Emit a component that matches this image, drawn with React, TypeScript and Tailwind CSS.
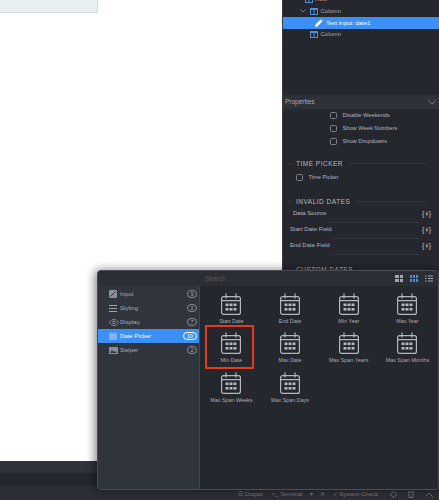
import React from 'react';

const font = { fontFamily: '"Liberation Sans", Arial, sans-serif' };

const categories = [
  { name: 'Input', count: 9, icon: 'input' },
  { name: 'Styling', count: 2, icon: 'styling' },
  { name: 'Display', count: 7, icon: 'display' },
  { name: 'Date Picker', count: 10, icon: 'date', active: true },
  { name: 'Swiper', count: 2, icon: 'swiper' },
];

const widgets = [
  'Start Date',
  'End Date',
  'Min Year',
  'Max Year',
  'Min Date',
  'Max Date',
  'Max Span Years',
  'Max Span Months',
  'Max Span Weeks',
  'Max Span Days',
];

function CalendarIcon() {
  return (
    <svg width="20" height="22" viewBox="0 0 20 22" fill="none" stroke="#b4b8bf" strokeWidth="1.2">
      <rect x="0.6" y="3.6" width="18.8" height="17.8" rx="2" />
      <path d="M0.6 7.6h18.8M5 0.5v5M15 0.5v5" />
      <g fill="#b4b8bf" stroke="none">
        <rect x="4.5" y="10.5" width="3" height="2.6" />
        <rect x="8.5" y="10.5" width="3" height="2.6" />
        <rect x="12.5" y="10.5" width="3" height="2.6" />
        <rect x="4.5" y="15" width="3" height="2.6" />
        <rect x="8.5" y="15" width="3" height="2.6" />
        <rect x="12.5" y="15" width="3" height="2.6" />
      </g>
    </svg>
  );
}

function ColumnIcon() {
  return (
    <svg width="8" height="7" viewBox="0 0 8 7" fill="none" stroke="#4a8fd8" strokeWidth="1">
      <rect x="0.5" y="0.5" width="7" height="6" />
      <path d="M4 0.5v6M0.5 1.5h7" />
    </svg>
  );
}

function Chevron() {
  return (
    <svg width="6" height="4" viewBox="0 0 6 4" fill="none" stroke="#8a8d93" strokeWidth="0.8">
      <path d="M0.5 0.5L3 3l2.5-2.5" />
    </svg>
  );
}

function CategoryIcon({ kind }: { kind: string }) {
  if (kind === 'input') {
    return (
      <svg width="8" height="8" viewBox="0 0 8 8">
        <rect width="8" height="8" rx="1" fill="#8b8f96" />
        <path d="M1.5 6.5L6.5 1.5" stroke="#2f333b" strokeWidth="1" />
      </svg>
    );
  }
  if (kind === 'styling') {
    return (
      <svg width="8" height="7" viewBox="0 0 8 7" stroke="#a0a4ab" strokeWidth="1">
        <path d="M0 0.5h8M0 3.5h8M0 6.5h8" />
      </svg>
    );
  }
  if (kind === 'display') {
    return (
      <svg width="10" height="7" viewBox="0 0 10 7" fill="none" stroke="#9a9ea5" strokeWidth="0.8">
        <path d="M0.5 3.5C2 1 3.5 0.5 5 0.5s3 0.5 4.5 3C8 6 6.5 6.5 5 6.5S2 6 0.5 3.5z" />
        <circle cx="5" cy="3.5" r="1.4" />
      </svg>
    );
  }
  if (kind === 'date') {
    return (
      <svg width="8" height="8" viewBox="0 0 8 8">
        <rect y="1" width="8" height="7" rx="1" fill="#7fb2ee" />
        <path d="M2 0v2M6 0v2" stroke="#7fb2ee" strokeWidth="0.8" />
      </svg>
    );
  }
  return (
    <svg width="9" height="7" viewBox="0 0 9 7">
      <rect width="9" height="7" fill="#8b8f96" />
      <path d="M1 6l2-3 2 2 1-1 2 2z" fill="#2f333b" />
    </svg>
  );
}

function Checkbox() {
  return <span className="h-[7px] w-[7px] shrink-0 rounded-[1.5px] border border-[#7d8087]" />;
}

function CheckRow({ label, className }: { label: string; className: string }) {
  return (
    <div className={`flex items-center gap-[5.5px] text-[5.7px] text-[#b3b6bb] ${className}`}>
      <Checkbox />
      <span>{label}</span>
    </div>
  );
}

function SectionTitle({ label, className }: { label: string; className: string }) {
  return (
    <div className={`flex items-center gap-[3px] pl-[5px] pr-[13px] ${className}`}>
      <span className="h-px w-[5px] bg-[#33363d]" />
      <span className="text-[6.5px] tracking-[0.5px] text-[#b9bcc1]">{label}</span>
      <span className="ml-[2px] h-px flex-1 bg-[#33363d]" />
    </div>
  );
}

function BindIcon() {
  return (
    <span className="flex w-[9px] items-center justify-between text-[7px] leading-none text-[#c9ccd1]">
      <span>{'{'}</span>
      <svg width="4" height="6" viewBox="0 0 4 6" fill="#e8983a">
        <path d="M2.4 0L0.3 3.3h1.4L1.2 6l2.5-3.6H2.2z" />
      </svg>
      <span>{'}'}</span>
    </span>
  );
}

function BindRow({ label, pad, lineLeft }: { label: string; pad: string; lineLeft: string }) {
  return (
    <div className="relative flex h-[16px] items-center justify-between pb-[2px] pr-[8px] text-[6px] text-[#b3b6bb]">
      <span className={pad}>{label}</span>
      <BindIcon />
      <span className={`absolute bottom-0 right-[20px] h-px bg-[#33363d] ${lineLeft}`} />
    </div>
  );
}

function RightPanel() {
  return (
    <div className="flex h-full w-[157px] flex-col overflow-hidden border-l border-[#3a3d44] bg-[#24272e]">
      <div className="-mt-[7px] flex h-[12px] shrink-0 items-center gap-[2px] pl-[14px] text-[6px] text-[#a9acb2]">
        <Chevron />
        <ColumnIcon />
        <span>Row</span>
      </div>
      <div className="flex h-[12px] shrink-0 items-center pl-[17px] text-[6px] text-[#a9acb2]">
        <span className="w-[10px]">
          <Chevron />
        </span>
        <ColumnIcon />
        <span className="ml-[2.5px]">Column</span>
      </div>
      <div className="flex h-[12px] shrink-0 items-center gap-[3px] bg-[#3b8ff5] pl-[32px] text-[6px] text-white">
        <svg width="8" height="8" viewBox="0 0 8 8" fill="#fff">
          <path d="M0 8l0.6-2.4L5.4 0.8 7.2 2.6 2.4 7.4zM5.9 0.3l0.5-0.3 1.6 1.6-0.3 0.5z" />
        </svg>
        <span>Text Input: date1</span>
      </div>
      <div className="flex h-[11px] shrink-0 items-center pl-[27px] text-[6px] text-[#a9acb2]">
        <ColumnIcon />
        <span className="ml-[2.5px]">Column</span>
      </div>

      <div className="mt-[55px] flex h-[14px] shrink-0 items-center justify-between bg-[#2e3138] pl-[2px] pr-[3px] text-[6.5px] text-[#a9acb2]">
        <span>Properties</span>
        <svg width="8" height="5" viewBox="0 0 8 5" fill="none" stroke="#8a8d93" strokeWidth="0.8">
          <path d="M0.5 0.5L4 4l3.5-3.5" />
        </svg>
      </div>

      <CheckRow label="Disable Weekends" className="ml-[47px] h-[13px] shrink-0" />
      <CheckRow label="Show Week Numbers" className="ml-[47px] h-[13px] shrink-0" />
      <CheckRow label="Show Dropdowns" className="ml-[47px] h-[13px] shrink-0" />
      <SectionTitle label="TIME PICKER" className="mt-[9.5px] h-[12px] shrink-0" />
      <CheckRow label="Time Picker" className="ml-[13px] mt-[1.5px] h-[13px] shrink-0" />
      <SectionTitle label="INVALID DATES" className="mt-[11.5px] h-[12px] shrink-0" />
      <div className="-mt-[1px] shrink-0">
        <BindRow label="Data Source" pad="pl-[10px]" lineLeft="left-[44px]" />
        <BindRow label="Start Date Field" pad="pl-[7px]" lineLeft="left-[49px]" />
        <BindRow label="End Date Field" pad="pl-[7px]" lineLeft="left-[47px]" />
      </div>
      <SectionTitle label="CUSTOM DATES" className="mt-[9px] h-[12px] shrink-0" />
    </div>
  );
}

function ViewToggles() {
  return (
    <div className="flex items-center gap-[7px]">
      <span className="grid h-[7px] w-[8px] grid-cols-2 gap-px">
        <i className="bg-[#a4a7ad]" />
        <i className="bg-[#a4a7ad]" />
        <i className="bg-[#a4a7ad]" />
        <i className="bg-[#a4a7ad]" />
      </span>
      <span className="grid h-[7px] w-[8px] grid-cols-3 gap-px">
        <i className="bg-[#3b8ff5]" />
        <i className="bg-[#3b8ff5]" />
        <i className="bg-[#3b8ff5]" />
        <i className="bg-[#3b8ff5]" />
        <i className="bg-[#3b8ff5]" />
        <i className="bg-[#3b8ff5]" />
      </span>
      <svg width="8" height="7" viewBox="0 0 8 7" stroke="#a4a7ad" strokeWidth="1">
        <path d="M0 1h1.5M3 1h5M0 3.5h1.5M3 3.5h5M0 6h1.5M3 6h5" />
      </svg>
    </div>
  );
}

function WidgetDialog() {
  return (
    <div className="absolute left-[97px] top-[270px] flex h-[220px] w-[342px] flex-col overflow-hidden rounded-[4px] border border-[#4a4d54] bg-[#24272e] shadow-[-2px_0_10px_rgba(0,0,0,0.5)]">
      <div className="flex h-[15px] shrink-0 items-center justify-between bg-[#2b2e35] pl-[107px] pr-[5px]">
        <span className="text-[6.5px] text-[#595c63]">Search</span>
        <ViewToggles />
      </div>
      <div className="flex min-h-0 flex-1">
        <div className="flex w-[102px] shrink-0 flex-col border-r border-[#43464d] bg-[#30343c] pt-[1px]">
          {categories.map((c) => (
            <div
              key={c.name}
              className={`flex h-[14px] items-center pl-[11px] pr-[2px] text-[6px] ${
                c.active ? 'bg-[#3b8ff5] text-white' : 'text-[#a9acb2]'
              }`}
            >
              <span className="flex w-[11px] justify-start">
                <CategoryIcon kind={c.icon} />
              </span>
              <span className="flex-1">{c.name}</span>
              <span
                className={`flex h-[8px] items-center justify-center rounded-full border text-[5.5px] ${
                  c.active ? 'w-[14px] border-white text-white' : 'w-[10px] border-[#8a8d93] text-[#a9acb2]'
                }`}
              >
                {c.count}
              </span>
            </div>
          ))}
        </div>
        <div className="grid flex-1 auto-rows-[39.5px] grid-cols-[repeat(4,58.7px)] content-start pl-[2px] pt-[6.5px]">
          {widgets.map((w) => (
            <div key={w} className="relative flex flex-col items-center text-center">
              <CalendarIcon />
              <span className="mt-[2px] whitespace-nowrap text-[5.4px] leading-[9px] text-[#a9acb2]">{w}</span>
              {w === 'Min Date' && (
                <span className="absolute -top-[7.5px] left-[3px] h-[44.5px] w-[49px] border-2 border-[#e8391a]" />
              )}
            </div>
          ))}
        </div>
      </div>
    </div>
  );
}

function StatusBar() {
  return (
    <div className="flex h-[39px] shrink-0 flex-col bg-[#2b2e35]">
      <div className="h-[12px] bg-[#30333a]" />
      <div className="h-[13px] bg-[#24272e]" />
      <div className="flex flex-1 items-center justify-end gap-[5px] pr-[6px] pt-[2px] text-[6px] text-[#7a7d84]">
        <span>☰ Output</span>
        <span className="ml-[4px]">{'>_'} Terminal</span>
        <span className="ml-[2px]">▾</span>
        <span className="ml-[2px]">✕</span>
        <span className="ml-[3px]">✓ System Check</span>
        <svg className="ml-[6px]" width="9" height="7" viewBox="0 0 9 7" fill="none" stroke="#7a7d84" strokeWidth="0.8">
          <path d="M1 3.5L4.5 0.5 8 3.5 4.5 6.5z" />
        </svg>
        <svg className="ml-[4px]" width="8" height="7" viewBox="0 0 8 7" fill="none" stroke="#7a7d84" strokeWidth="0.8">
          <path d="M0.5 1h7M2 1v5.5h4V1" />
        </svg>
        <svg className="ml-[5px]" width="8" height="5" viewBox="0 0 8 5" fill="none" stroke="#7a7d84" strokeWidth="0.8">
          <path d="M0.5 4.5L4 1l3.5 3.5" />
        </svg>
      </div>
    </div>
  );
}

export default function App() {
  return (
    <div className="relative flex h-[500px] w-[439px] flex-col overflow-hidden bg-white" style={font}>
      <div className="flex min-h-0 flex-1">
        <div className="flex-1 bg-white">
          <div className="h-[13px] w-[98px] border-b border-r border-[#d5dddd] bg-[#e9eef0]" />
        </div>
        <RightPanel />
      </div>
      <StatusBar />
      <WidgetDialog />
    </div>
  );
}
